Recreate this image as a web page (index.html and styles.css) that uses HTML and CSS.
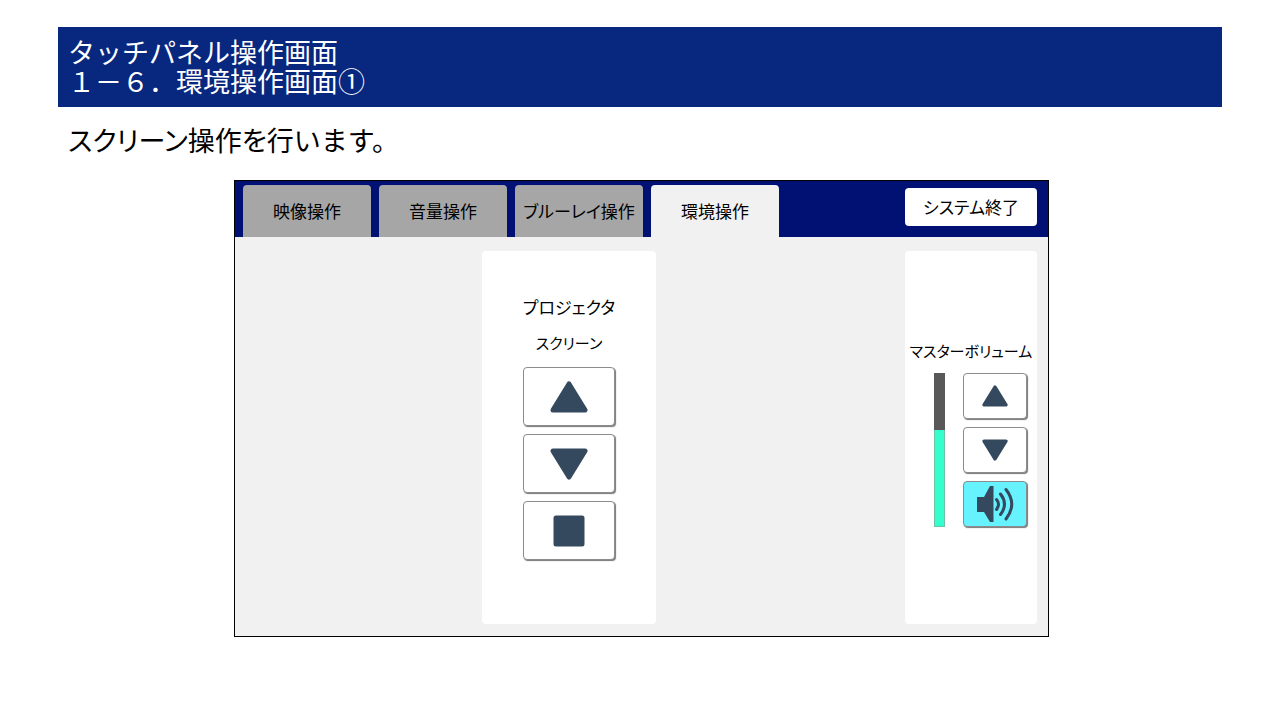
FILE: index.html
```html
<!DOCTYPE html>
<html lang="ja">
<head>
<title>タッチパネル操作画面</title>
<meta charset="UTF-8">
<meta name="viewport" content="width=device-width, initial-scale=1.0">

<link rel="stylesheet" href="styles.css">

</head>
<body>

<h1 class="page-title">タッチパネル操作画面<br>１－６．環境操作画面①</h1>
<p class="lead">スクリーン操作を<span class="kana">行います。</span></p>

<div class="panel-wrap">
	<div class="panel">

		<div class="topbar">
			<div class="tabs" role="tablist">
				<button type="button" class="tab" role="tab" aria-selected="false">映像操作</button>
				<button type="button" class="tab" role="tab" aria-selected="false">音量操作</button>
				<button type="button" class="tab" role="tab" aria-selected="false">ブルーレイ操作</button>
				<button type="button" class="tab active" role="tab" aria-selected="true">環境操作</button>
			</div>
			<button type="button" class="exit">システム終了</button>
		</div>

		<div class="controls">
			<section class="card projector">
				<h2>プロジェクタ</h2>
				<h3>スクリーン</h3>
				<div class="keys">
					<button type="button" class="key" aria-label="上げる">
						<svg width="38" height="32" viewBox="0 0 38 32"><path d="M19 3L35 29H3Z"/></svg>
					</button>
					<button type="button" class="key" aria-label="下げる">
						<svg width="38" height="32" viewBox="0 0 38 32"><path d="M19 29L35 3H3Z"/></svg>
					</button>
					<button type="button" class="key" aria-label="停止">
						<svg width="38" height="32" viewBox="0 0 38 32"><path d="M6 3H32V29H6Z"/></svg>
					</button>
				</div>
			</section>

			<section class="card volume">
				<h3>マスターボリューム</h3>
				<div class="volume-row">
					<div class="meter" role="meter" aria-label="マスターボリューム" aria-valuemin="0" aria-valuemax="100" aria-valuenow="63">
						<div class="level" style="height:63%"></div>
					</div>
					<div class="keys">
						<button type="button" class="key small" aria-label="音量を上げる">
							<svg width="26" height="22" viewBox="0 0 38 32"><path d="M19 3L35 29H3Z"/></svg>
						</button>
						<button type="button" class="key small" aria-label="音量を下げる">
							<svg width="26" height="22" viewBox="0 0 38 32"><path d="M19 29L35 3H3Z"/></svg>
						</button>
						<button type="button" class="key small on" aria-label="ミュート">
							<svg class="speaker" width="38" height="38" viewBox="0 0 38 38">
								<path class="body" d="M1 12H8L14 1H17.500V37H14L8 27H1Z"/>
								<path class="wave" d="M20.500 14.500Q24.500 19 20.500 24.500M24.500 9Q32.500 19 24.500 29.500M30 4.500Q41.500 19 30 34"/>
							</svg>
						</button>
					</div>
				</div>
			</section>
		</div>

	</div>
</div>

</body>
</html>
```
FILE: styles.css
```css
body{
	margin: 0px;
	padding: 27px 58px;
	background: #fff;
	color: #000;
	font-family: "Noto Sans CJK JP", sans-serif;
	font-weight: 400;
	font-feature-settings: "palt";
}

h1, h2, h3, p{
	margin: 0px;
	font-weight: inherit;
}

button{
	font: inherit;
	font-feature-settings: inherit;
	color: inherit;
	padding: 0px;
	border: none;
	cursor: pointer;
}

.page-title{
	background: #08277f;
	color: #fff;
	font-size: 27px;
	line-height: 29px;
	font-feature-settings: normal;
	padding: 10px 10px 12px;
}

.lead{
	font-size: 27px;
	line-height: 40px;
	padding: 13px 10px;
}

.kana{
	font-feature-settings: normal;
}


/* TOUCH PANEL */

.panel-wrap{
	padding: 7px 173px 0px 176px;
}

.panel{
	border: 1px solid #000;
	background: #f1f1f1;
	font-size: 17px;
	line-height: 24px;
}

.topbar{
	display: flex;
	justify-content: space-between;
	background: #001173;
	height: 56px;
	padding: 0px 11px 0px 8px;
}

.tabs{
	display: flex;
	gap: 8px;
	padding-top: 4px;
}

.tab{
	width: 128px;
	background: #a6a6a6;
	border-radius: 4px 4px 0px 0px;
	white-space: nowrap;
}

.tab.active{
	background: #f1f1f1;
}

.exit{
	width: 132px;
	height: 38px;
	margin-top: 7px;
	background: #fff;
	border-radius: 4px;
}

.controls{
	display: grid;
	grid-template-columns: 1fr 132px;
	column-gap: 2px;
	padding: 14px 11px 12px 0px;
}

.card{
	background: #fff;
	border-radius: 4px;
	min-height: 373px;
	box-sizing: border-box;
}

.card h2{
	font-size: 17px;
}

.card h3{
	font-size: 15px;
	line-height: 20px;
	white-space: nowrap;
}

.projector{
	display: flex;
	flex-direction: column;
	align-items: center;
	justify-self: center;
	gap: 14px;
	width: 174px;
	padding-top: 44px;
}

.volume{
	padding-top: 90px;
	text-align: center;
}

.volume-row{
	display: flex;
	justify-content: flex-end;
	gap: 18px;
	padding: 12px 10px 0px 0px;
}

.meter{
	display: flex;
	align-items: flex-end;
	width: 11px;
	background: #595959;
}

.level{
	width: 100%;
	background: #33ffcc;
	border: 1px solid #6bc4a8;
	border-top: none;
	box-sizing: border-box;
}

.keys{
	display: flex;
	flex-direction: column;
	gap: 8px;
}


/* KEYS */

.key{
	display: flex;
	align-items: center;
	justify-content: center;
	width: 92px;
	height: 59px;
	background: #fff;
	border: 1px solid #8c8c8c;
	border-radius: 4px;
	box-shadow: 1px 1px 1px #777;
}

.key.small{
	width: 64px;
	height: 46px;
}

.key.on{
	background: #66f2ff;
}

.key svg{
	display: block;
	fill: #34495e;
	stroke: #34495e;
	stroke-width: 5;
	stroke-linejoin: round;
}

.key .speaker .body{
	stroke: none;
}

.key .speaker .wave{
	fill: none;
	stroke-width: 3;
	stroke-linecap: round;
}
```
